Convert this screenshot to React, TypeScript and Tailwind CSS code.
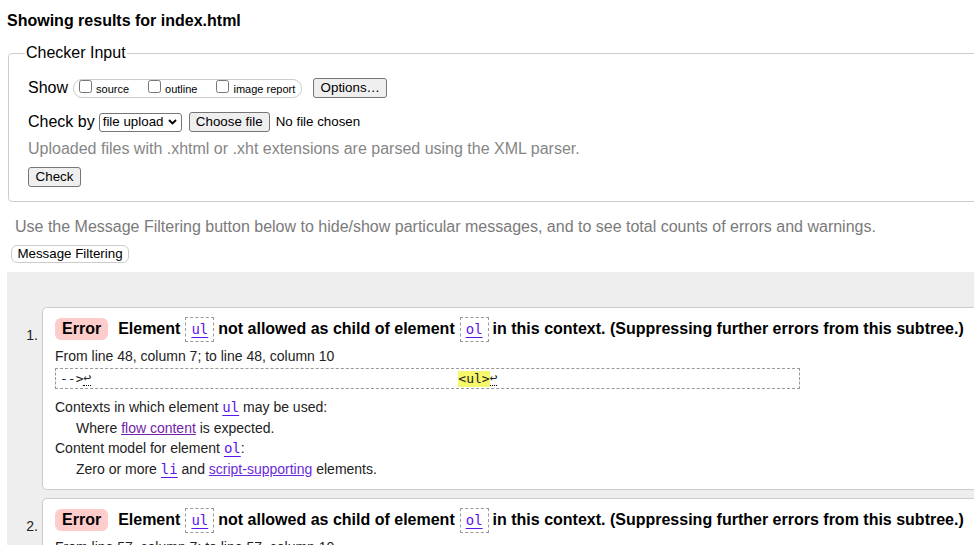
import React from "react";

const Btn = ({ children, className = "" }: { children: React.ReactNode; className?: string }) => (
  <button
    className={
      "h-[20px] bg-[#efefef] border border-[#767676] rounded-[3px] text-[13.33px] leading-[16px] text-black " +
      className
    }
  >
    {children}
  </button>
);

const Code = ({ children }: { children: React.ReactNode }) => (
  <span className="inline-flex items-center h-[25px] border border-dashed border-[#999] px-[5px] font-['DejaVu_Sans_Mono',monospace] font-normal text-[14px] text-[#5b16f0] underline underline-offset-[3px]">
    {children}
  </span>
);

const Code2 = ({ children }: { children: React.ReactNode }) => (
  <span className="font-['DejaVu_Sans_Mono',monospace] text-[14px] text-[#5b16f0] underline underline-offset-[3px]">
    {children}
  </span>
);

const Check = ({ label, last }: { label: string; last?: boolean }) => (
  <label className={"flex items-center " + (last ? "" : "mr-[19px]")}>
    <input type="checkbox" className="w-[13px] h-[13px] mt-[-3px]" />
    <span className="ml-[4px] text-[11px] leading-[14px] mt-[2px]">{label}</span>
  </label>
);

const Message = ({ n, from }: { n: number; from: string }) => (
  <li className="flex">
    <span className="w-[35px] pr-[4px] pt-[18px] text-right text-[14px] leading-[20px] text-[#222]">{n}.</span>
    <div className="flex-1 bg-white border border-[#ccc] rounded-[5px] pl-[12px] pt-[8px] pb-[10px]">
      <div className="flex items-center h-[26px] text-[16px] font-bold text-black whitespace-nowrap">
        <span className="h-[22px] flex items-center px-[7px] bg-[#fcc] rounded-[6px]">Error</span>
        <span className="ml-[10px]">Element</span>
        <span className="ml-[5px] mr-[4px]">
          <Code>ul</Code>
        </span>
        <span>not allowed as child of element</span>
        <span className="ml-[5px] mr-[4px]">
          <Code>ol</Code>
        </span>
        <span>in this context. (Suppressing further errors from this subtree.)</span>
      </div>
      <p className="mt-[4px] text-[14px] leading-[20px] text-[#222]">{from}</p>
      <div className="mt-[2px] w-[745px] h-[21px] border border-dashed border-[#999] pl-[4px] flex items-center font-['DejaVu_Sans_Mono',monospace] text-[13px] text-[#222] whitespace-pre">
        <span>--&gt;</span>
        <span className="border-b border-dotted border-black leading-[14px]">↩</span>
        <span className="ml-[367px] bg-[#f7f76b] leading-[16px]">&lt;ul&gt;</span>
        <span className="border-b border-dotted border-black leading-[14px]">↩</span>
      </div>
      <div className="mt-[8px] text-[14px] leading-[20.5px] text-[#222]">
        <p>
          Contexts in which element <Code2>ul</Code2> may be used:
        </p>
        <p className="pl-[21px]">
          Where <a className="text-[#7222a8] underline">flow content</a> is expected.
        </p>
        <p>
          Content model for element <Code2>ol</Code2>:
        </p>
        <p className="pl-[21px]">
          Zero or more <Code2>li</Code2> and{" "}
          <a className="text-[#6a2bd9] underline">script-supporting</a> elements.
        </p>
      </div>
    </div>
  </li>
);

export default function App() {
  return (
    <div className="w-[974px] h-[545px] overflow-hidden bg-white font-['Liberation_Sans',Arial,sans-serif] text-black">
      <div className="w-[1010px]">
        <h2 className="pl-[7px] pt-[11px] text-[16px] font-bold leading-[20px]">Showing results for index.html</h2>

        <fieldset className="ml-[8px] mt-[12px] border border-[#ccc] rounded-[4px] px-[19px] pb-[14px]">
          <legend className="-ml-[3px] px-[1px] text-[16px] leading-[20px]">Checker Input</legend>

          <div className="mt-[15px] flex items-center h-[20px]">
            <span className="text-[16px]">Show</span>
            <div className="ml-[5px] h-[19px] flex items-center border border-[#ccc] rounded-[9px] pl-[5px] pr-[6px]">
              <Check label="source" />
              <Check label="outline" />
              <Check label="image report" last />
            </div>
            <Btn className="ml-[11px] w-[74px]">Options…</Btn>
          </div>

          <div className="mt-[14px] flex items-center h-[20px]">
            <span className="text-[16px]">Check by</span>
            <div className="ml-[4px] w-[83px] h-[19px] bg-white border border-[#767676] rounded-[3px] flex items-center justify-between pl-[3px] pr-[4px] text-[13.33px]">
              <span>file upload</span>
              <svg width="9" height="6" viewBox="0 0 9 6">
                <path d="M1 1l3.5 3.5L8 1" stroke="#000" strokeWidth="1.8" fill="none" />
              </svg>
            </div>
            <Btn className="ml-[7px] w-[81px]">Choose file</Btn>
            <span className="ml-[6px] text-[13.33px]">No file chosen</span>
          </div>

          <p className="mt-[7px] text-[16px] leading-[20px] text-[#868686]">
            Uploaded files with .xhtml or .xht extensions are parsed using the XML parser.
          </p>

          <Btn className="block mt-[8px] w-[53px]">Check</Btn>
        </fieldset>

        <p className="mt-[15px] pl-[15px] text-[16px] leading-[20px] text-[#7a7a7a]">
          Use the Message Filtering button below to hide/show particular messages, and to see total counts of errors and
          warnings.
        </p>

        <button className="block mt-[8px] ml-[11px] h-[18px] w-[118px] bg-white border border-[#ccc] rounded-[6px] text-[13.33px] leading-[16px] text-black">
          Message Filtering
        </button>

        <div className="mt-[9px] ml-[7px] bg-[#eee] pt-[35px] pb-[20px]">
          <ol className="flex flex-col gap-[8px]">
            <Message n={1} from="From line 48, column 7; to line 48, column 10" />
            <Message n={2} from="From line 57, column 7; to line 57, column 10" />
          </ol>
        </div>
      </div>
    </div>
  );
}
